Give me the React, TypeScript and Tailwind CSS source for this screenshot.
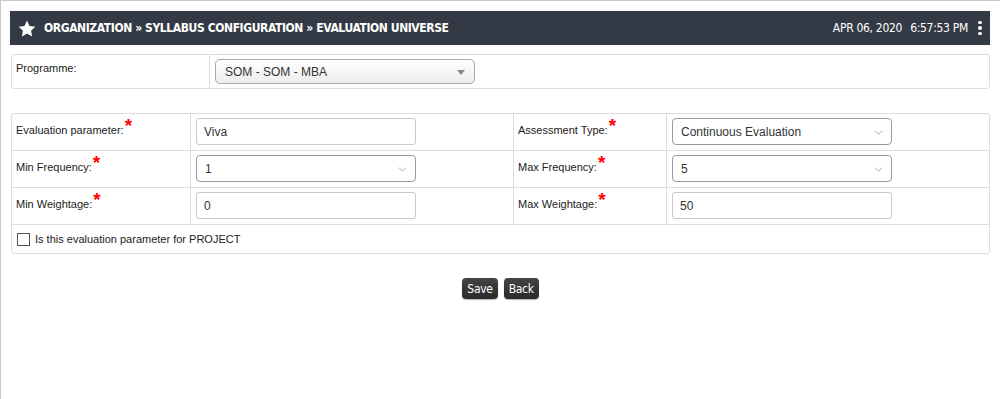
import { ChevronDown } from 'lucide-react';

const label = "text-[11px] text-[#222] font-['Liberation_Sans',Tahoma,sans-serif]";

function Req({ text }: { text: string }) {
  return (
    <span className={label}>
      {text}
      <span className="ml-[1px] inline-block h-[8px] align-top text-[19px] font-bold leading-[10px] text-[#ff0000]">*</span>
    </span>
  );
}

function TextBox({ value }: { value: string }) {
  return (
    <div className="flex h-[27px] w-[220px] items-center rounded-[3px] border border-[#c8c8c8] bg-white px-[7px] pt-[1px] text-[12px] text-[#333] font-['Liberation_Sans',sans-serif]">
      {value}
    </div>
  );
}

function SelectBox({ value }: { value: string }) {
  return (
    <div className="flex h-[27px] w-[220px] items-center justify-between rounded-[4px] border border-[#9a9a9a] bg-white pl-[8px] pr-[6px] pt-[1px] text-[12px] text-[#333] font-['Liberation_Sans',sans-serif]">
      <span>{value}</span>
      <ChevronDown className="h-[13px] w-[13px] text-[#777]" strokeWidth={1.2} />
    </div>
  );
}

export default function App() {
  return (
    <div className="h-[399px] w-[1000px] border-l border-t border-[#c8c8c8] bg-white pl-[9px] pr-[10px] pt-[10px]">
      <div className="flex h-[34px] items-center justify-between bg-[#343a45] pl-[8px] pr-[8px] text-white">
        <div className="flex items-center gap-[8px]">
          <svg width="18" height="17" viewBox="0 0 24 23" fill="white">
            <path d="M12 0.8l3.4 7.2 7.8 1-5.7 5.4 1.4 7.8L12 18.4l-6.9 3.8 1.4-7.8L0.8 9l7.8-1z" />
          </svg>
          <span className="text-[12px] font-bold tracking-[-0.4px] font-['DejaVu_Sans_Condensed','DejaVu_Sans',sans-serif]">
            ORGANIZATION » SYLLABUS CONFIGURATION » EVALUATION UNIVERSE
          </span>
        </div>
        <div className="flex items-center gap-[10px]">
          <span className="flex gap-[8px] text-[12px] tracking-[-0.3px] font-['DejaVu_Sans_Condensed','DejaVu_Sans',sans-serif]">
            <span>APR 06, 2020</span>
            <span>6:57:53 PM</span>
          </span>
          <div className="flex flex-col gap-[2px]">
            <span className="h-[3.5px] w-[4px] rounded-full bg-white" />
            <span className="h-[3.5px] w-[4px] rounded-full bg-white" />
            <span className="h-[3.5px] w-[4px] rounded-full bg-white" />
          </div>
        </div>
      </div>

      <div className="mt-[9px] ml-[1px] flex h-[35px] rounded-[3px] border border-[#dddddd]">
        <div className={`w-[198px] border-r border-[#dddddd] pl-[4px] pt-[5px] ${label}`}>Programme:</div>
        <div className="pl-[5px] pt-[4px]">
          <div className="flex h-[25px] w-[260px] items-center justify-between rounded-[5px] border border-[#a8a8a8] bg-gradient-to-b from-white to-[#ededed] pl-[9px] pr-[9px] pt-[1px] text-[12px] text-[#333] font-['Liberation_Sans',sans-serif]">
            <span>SOM - SOM - MBA</span>
            <svg width="8" height="5" viewBox="0 0 8 5"><path d="M0 0h8L4 5z" fill="#888" /></svg>
          </div>
        </div>
      </div>

      <div className="mt-[24px] ml-[1px] rounded-[3px] border border-[#dddddd]">
        {[
          ['Evaluation parameter:', <TextBox value="Viva" />, 'Assessment Type:', <SelectBox value="Continuous Evaluation" />],
          ['Min Frequency:', <SelectBox value="1" />, 'Max Frequency:', <SelectBox value="5" />],
          ['Min Weightage:', <TextBox value="0" />, 'Max Weightage:', <TextBox value="50" />],
        ].map((row, i) => (
          <div key={i} className="flex h-[37px] border-b border-[#dddddd]">
            <div className="w-[179px] border-r border-[#dddddd] pl-[4px] pt-[7px] leading-[14px]"><Req text={row[0] as string} /></div>
            <div className="w-[323px] border-r border-[#dddddd] pl-[5px] pt-[4px]">{row[1]}</div>
            <div className="w-[153px] border-r border-[#dddddd] pl-[4px] pt-[7px] leading-[14px]"><Req text={row[2] as string} /></div>
            <div className="pl-[5px] pt-[4px]">{row[3]}</div>
          </div>
        ))}
        <div className="flex h-[28px] items-center gap-[5px] pl-[5px]">
          <span className="h-[13px] w-[13px] border border-[#555] bg-white" />
          <span className={label}>Is this evaluation parameter for PROJECT</span>
        </div>
      </div>

      <div className="mt-[24px] flex justify-center gap-[6px] pl-[1px]">
        {['Save', 'Back'].map((b) => (
          <button key={b} className="h-[21px] rounded-[4px] bg-gradient-to-b from-[#444] to-[#2a2a2a] px-[5px] text-[12px] tracking-[-0.3px] text-white shadow-[0_1px_1px_rgba(0,0,0,0.3)] font-['DejaVu_Sans_Condensed','DejaVu_Sans',sans-serif]">
            {b}
          </button>
        ))}
      </div>
    </div>
  );
}
